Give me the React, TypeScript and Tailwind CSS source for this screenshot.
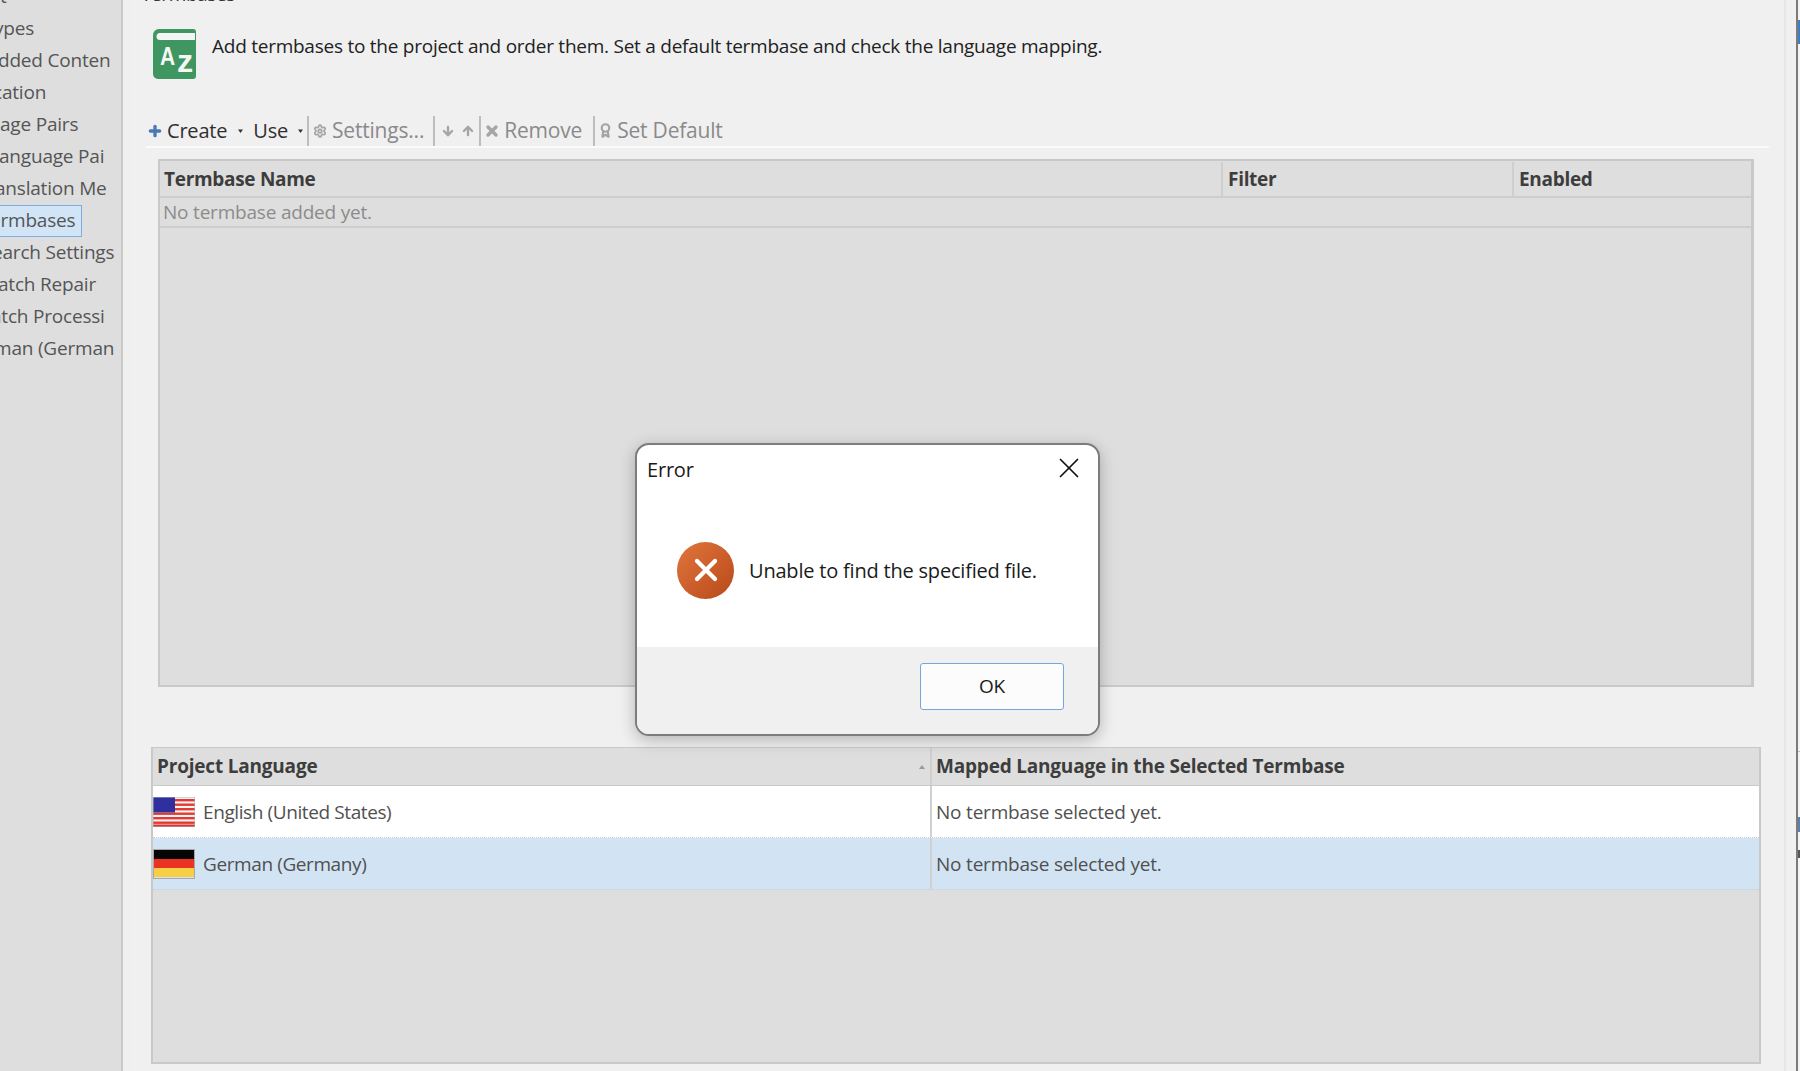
// App.tsx
import React from 'react';
import { Plus, Settings, ArrowDown, ArrowUp, X, Award } from 'lucide-react';

// les libellés sont coupés à gauche par le bord de la fenêtre
const sidebarItems = [
    { label: 't', offset: '' },
    { label: 'ypes', offset: '-ml-[6px]' },
    { label: 'dded Conten', offset: '-ml-[2px]' },
    { label: 'cation', offset: '-ml-[7px]' },
    { label: 'age Pairs', offset: '' },
    { label: 'anguage Pai', offset: '-ml-[1px]' },
    { label: 'anslation Me', offset: '-ml-[5px]' },
    { label: 'ermbases', offset: '-ml-[10px]', active: true },
    { label: 'earch Settings', offset: '-ml-[8px]' },
    { label: 'atch Repair', offset: '-ml-[2px]' },
    { label: 'atch Processi', offset: '-ml-[9px]' },
    { label: 'man (German', offset: '-ml-[6px]' },
];

const Separator = () => <div className="w-[2px] h-[30px] bg-[#bdbdbd] shrink-0" />;

const Caret = () => (
    <svg width="5" height="4" viewBox="0 0 5 4" className="shrink-0">
        <path d="M0 0.5h5L2.5 4z" fill="#333" />
    </svg>
);

const Sidebar = () => (
    <div className="w-[123px] shrink-0 h-full bg-[#dedede] border-r-2 border-[#c9c9c9] overflow-hidden text-[19px] text-[#555]">
        <div className="-mt-[19px]">
            {sidebarItems.map((item) => (
                <div key={item.label} className="h-[32px] flex items-center whitespace-nowrap overflow-hidden">
                    <div
                        className={
                            item.active
                                ? 'w-[82px] h-[32px] flex items-center overflow-hidden bg-[#d1e5f7] border border-l-0 border-[#80ade0]'
                                : 'flex items-center'
                        }
                    >
                        <span className={`${item.offset} -mt-[2px]`}>{item.label}</span>
                    </div>
                </div>
            ))}
        </div>
    </div>
);

const Logo = () => (
    <svg width="44" height="50" viewBox="0 0 44 50" className="shrink-0">
        <path
            d="M6 0H40a3 3 0 0 1 3 3V47a3 3 0 0 1-3 3H5a5 5 0 0 1-5-5V6a6 6 0 0 1 6-6z"
            fill="#3f9661"
        />
        <path d="M7 4H42V11H7a3.5 3.5 0 0 1 0-7z" fill="#f2f5f2" />
        <text x="7" y="36" fontSize="25" fontWeight="700" fill="#f4f7f4" textLength="15" lengthAdjust="spacingAndGlyphs" fontFamily="'Liberation Sans', sans-serif">A</text>
        <text x="24" y="43" fontSize="31" fontWeight="700" fill="#f4f7f4" textLength="16" lengthAdjust="spacingAndGlyphs" fontFamily="'Liberation Sans', sans-serif">z</text>
    </svg>
);

const Toolbar = () => (
    <div className="h-[32px] pb-[1px] ml-[16px] mr-[15px] border-b-2 border-[#fbfbfb] flex items-center text-[21px] text-[#8a8a8a]">
        <Plus size={16} strokeWidth={5} className="ml-[1px] text-[#4a78b5] shrink-0" />
        <span className="ml-[4px] text-[20px] text-[#2f2f2f]">Create</span>
        <span className="ml-[11px]"><Caret /></span>
        <span className="ml-[10px] text-[20px] text-[#2f2f2f]">Use</span>
        <span className="ml-[10px] mr-[4px]"><Caret /></span>
        <Separator />
        <Settings size={14} strokeWidth={3} className="ml-[4px] text-[#a5a5a5] shrink-0" />
        <span className="ml-[5px]">Settings...</span>
        <span className="ml-[9px]"><Separator /></span>
        <ArrowDown size={14} strokeWidth={4} className="ml-[6px] text-[#a5a5a5] shrink-0" />
        <ArrowUp size={14} strokeWidth={4} className="ml-[6px] text-[#a5a5a5] shrink-0" />
        <span className="ml-[4px]"><Separator /></span>
        <X size={16} strokeWidth={5} className="ml-[3px] text-[#a5a5a5] shrink-0" />
        <span className="ml-[4px]">Remove</span>
        <span className="ml-[11px]"><Separator /></span>
        <Award size={15} strokeWidth={3.5} className="ml-[3px] text-[#a5a5a5] shrink-0" />
        <span className="ml-[4px]">Set Default</span>
    </div>
);

const TermbaseTable = () => (
    <div className="ml-[28px] mr-[30px] mt-[11px] h-[528px] bg-[#dedede] border-2 border-[#c9c9c9] border-r-[3px]">
        <div className="h-[37px] pt-[1px] flex items-center font-bold text-[19px] text-[#3d3d3d] border-b-2 border-[#cdcdcd] tracking-[-0.3px]">
            <div className="w-[1063px] h-full flex items-center pl-[4px] border-r-2 border-[#cfcfcf]">Termbase Name</div>
            <div className="w-[291px] h-full flex items-center pl-[5px] border-r-2 border-[#cfcfcf]">Filter</div>
            <div className="flex-1 pl-[5px]">Enabled</div>
        </div>
        <div className="h-[30px] flex items-center pl-[3px] text-[19px] text-[#8c8c8c] border-b-2 border-[#cdcdcd]">
            No termbase added yet.
        </div>
    </div>
);

const UsFlag = () => (
    <svg width="42" height="30" viewBox="0 0 42 30" className="shrink-0">
        <rect width="42" height="30" fill="#f4f4f4" />
        {[2, 6.5, 11, 15.5, 20, 24.5].map((y) => (
            <rect key={y} x="0" y={y} width="42" height="2.4" fill="#e23a32" />
        ))}
        <rect x="0" y="27.5" width="42" height="2.5" fill="#d8352e" />
        <rect x="0" y="0" width="22" height="15.5" fill="#2f2f9e" />
        <rect x="0" y="0" width="42" height="30" fill="none" stroke="#b5b5b5" />
    </svg>
);

const DeFlag = () => (
    <div className="w-[42px] h-[30px] shrink-0 flex flex-col border border-[#a8a8a8]">
        <div className="flex-1 bg-[#050505]" />
        <div className="flex-1 bg-[#ea3323]" />
        <div className="flex-1 bg-[#f7cf46]" />
    </div>
);

const languageRows = [
    { name: 'English (United States)', flag: <UsFlag />, selected: false },
    { name: 'German (Germany)', flag: <DeFlag />, selected: true },
];

const LanguageTable = () => (
    <div className="ml-[21px] mr-[23px] mt-[60px] h-[317px] bg-[#dedede] border-2 border-t border-[#c9c9c9]">
        <div className="h-[38px] flex items-center font-bold text-[19px] text-[#3d3d3d] border-b border-[#c9c9c9]">
            <div className="w-[779px] h-full flex items-center justify-between pl-[4px] pr-[5px] border-r-2 border-[#cfcfcf]">
                <span>Project Language</span>
                <svg width="6" height="4" viewBox="0 0 6 4"><path d="M0 4h6L3 0z" fill="#9a9a9a" /></svg>
            </div>
            <div className="flex-1 pl-[4px]">Mapped Language in the Selected Termbase</div>
        </div>
        {languageRows.map((row) => (
            <div
                key={row.name}
                className={
                    row.selected
                        ? 'h-[52px] flex items-center text-[19px] text-[#505050] bg-[#d2e4f4] border-b border-dotted border-[#c4cdd6]'
                        : 'h-[52px] flex items-center text-[19px] text-[#505050] bg-white border-b border-dotted border-[#c4cdd6]'
                }
            >
                <div className="w-[779px] h-full flex items-center border-r-2 border-[#d0d0d0]">
                    {row.flag}
                    <span className="ml-[8px] mt-[2px] tracking-[-0.4px]">{row.name}</span>
                </div>
                <div className="flex-1 pl-[4px] mt-[2px]">No termbase selected yet.</div>
            </div>
        ))}
    </div>
);

const ErrorDialog = () => (
    <div className="absolute left-[635px] top-[443px] w-[465px] h-[293px] flex flex-col rounded-[14px] border-2 border-[#7c7c7c] bg-white overflow-hidden shadow-[0_4px_16px_rgba(0,0,0,0.25)] text-[#1a1a1a]">
        <div className="h-[50px] shrink-0 flex items-center justify-between pl-[10px] pr-[12px] text-[20px]">
            <span>Error</span>
            <X size={34} strokeWidth={1.2} className="text-[#111] -mt-[4px]" />
        </div>
        <div className="flex-1 flex items-center pl-[40px] pb-[2px]">
            <div className="w-[57px] h-[57px] rounded-full bg-linear-to-br from-[#e0763c] to-[#b9481a] flex items-center justify-center shrink-0">
                <X size={36} strokeWidth={2.8} className="text-white" />
            </div>
            <span className="ml-[15px] mt-[1px] text-[20px] whitespace-nowrap">Unable to find the specified file.</span>
        </div>
        <div className="h-[87px] shrink-0 bg-[#f0f0f0] flex items-start justify-end pt-[16px] pr-[34px]">
            <div className="w-[144px] h-[47px] bg-[#fcfcfc] border-[1.5px] border-[#7aa5dc] rounded-[3px] flex items-center justify-center text-[19px]">
                OK
            </div>
        </div>
    </div>
);

const App = () => (
    <div className="w-[1800px] h-[1071px] relative flex overflow-hidden bg-[#f0f0f0] font-['Open_Sans','Noto_Sans',sans-serif] tracking-[-0.2px]">
        <Sidebar />
        <div className="w-[1657px] shrink-0 h-full border-r-2 border-[#e6e6e6] border-l border-l-[#ededed] ml-[6px]">
            <div className="h-[2px] overflow-hidden relative">
                <span className="absolute left-[11px] -top-[20px] text-[19px] tracking-[-0.4px] text-[#333]">Termbases</span>
            </div>
            <div className="h-[114px] flex pt-[27px] pl-[23px]">
                <Logo />
                <span className="ml-[15px] mt-[3px] text-[19px] text-[#222] whitespace-nowrap tracking-[-0.25px]">
                    Add termbases to the project and order them. Set a default termbase and check the language mapping.
                </span>
            </div>
            <Toolbar />
            <TermbaseTable />
            <LanguageTable />
        </div>
        <div className="flex-1" />
        <div className="w-[4px] shrink-0 h-full flex flex-col border-l-2 border-[#7b7b7b] bg-[#f4f4f4]">
            <div className="h-[20px]" />
            <div className="h-[24px] bg-[#3b80c2]" />
            <div className="h-[707px]" />
            <div className="h-[66px] border-t border-[#c0c0c0]" />
            <div className="h-[15px] bg-[#5a80b0]" />
            <div className="h-[18px]" />
            <div className="h-[8px] bg-[#555]" />
        </div>
        <ErrorDialog />
    </div>
);

export default App;
